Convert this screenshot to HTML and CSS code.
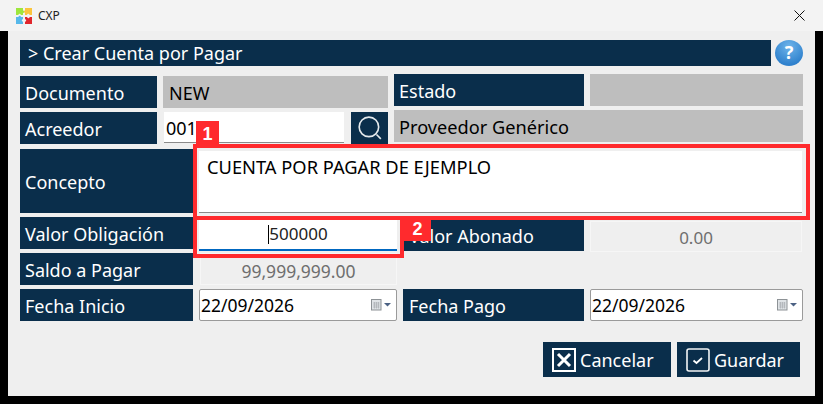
FILE: index.html
```html
<!DOCTYPE html>
<html lang="en">

<head>
    <meta charset="UTF-8">
    <title>CXP</title>
    <link rel="stylesheet" href="styles.css">
</head>

<body>
    <div class="titlebar">
        <svg class="app-logo" viewBox="0 0 16 16" width="16" height="16">
            <path fill="#9ee63c" d="M0 0h7v2.5a1.2 1.2 0 0 1 0 2.4V7H4.800a1.200 1.200 0 0 0-2.400 0H0z" />
            <path fill="#fbc53d" d="M9 0h7v7h-2.500a1.200 1.200 0 0 0-2.400 0H9V4.800a1.200 1.200 0 0 1 0-2.400z" />
            <path fill="#56b8ea" d="M0 9h2.500a1.200 1.200 0 0 1 2.400 0H7v2.200a1.200 1.200 0 0 0 0 2.400V16H0z" />
            <path fill="#e0262c" d="M9 9h2.200a1.200 1.200 0 0 0 2.400 0H16v7H9v-2.400a1.200 1.200 0 0 0 0-2.400z" />
        </svg>
        <span class="app-name">CXP</span>
        <svg class="close-x" viewBox="0 0 11 11" width="11" height="11">
            <path d="M.5.5l10 10M10.500.5l-10 10" stroke="#111" stroke-width="1" fill="none" />
        </svg>
    </div>

    <div class="dialog">
        <div class="header-row">
            <div class="header-bar">&gt; Crear Cuenta por Pagar</div>
            <div class="help-btn">?</div>
        </div>

        <div class="top-section">
            <div class="col col-left-top">
                <div class="row">
                    <div class="label label-doc">Documento</div>
                    <div class="readonly-grey grow">NEW</div>
                </div>
                <div class="row">
                    <div class="label label-doc">Acreedor</div>
                    <div class="text-input acreedor-input">001</div>
                    <div class="search-btn">
                        <svg viewBox="0 0 24 24" width="26" height="26">
                            <circle cx="11" cy="11" r="9" stroke="#e4e9ec" stroke-width="1.500" fill="none" />
                            <path d="M18 18l4 4" stroke="#e4e9ec" stroke-width="1.500" />
                        </svg>
                    </div>
                </div>
            </div>
            <div class="col col-right-top">
                <div class="row">
                    <div class="label label-estado">Estado</div>
                    <div class="readonly-grey grow"></div>
                </div>
                <div class="row">
                    <div class="readonly-grey grow proveedor">Proveedor Genérico</div>
                </div>
            </div>
        </div>

        <div class="concept-row">
            <div class="label label-wide concept-label">Concepto</div>
            <div class="concept-box">CUENTA POR PAGAR DE EJEMPLO</div>
        </div>

        <div class="lower-section">
            <div class="col col-left-low">
                <div class="row">
                    <div class="label label-wide">Valor Obligación</div>
                    <div class="amount-input"><span class="caret"></span>500000</div>
                </div>
                <div class="row">
                    <div class="label label-wide">Saldo a Pagar</div>
                    <div class="readonly-light saldo">99,999,999.00</div>
                </div>
                <div class="row">
                    <div class="label label-wide">Fecha Inicio</div>
                    <div class="date-input">
                        <span>22/09/2026</span>
                        <svg class="cal-icon" viewBox="0 0 20 12" width="20" height="12">
                            <rect x=".5" y=".5" width="9.500" height="10.500" fill="#dfe3e6" stroke="#8d9296" />
                            <path d="M2 4h6.500M2 6h6.500M2 8h6.500M3.500 3v6.500M5.500 3v6.500M7.500 3v6.500" stroke="#a9aeb2" stroke-width=".7" />
                            <path d="M13 4h7l-3.500 3.500z" fill="#4c6284" />
                        </svg>
                    </div>
                </div>
            </div>
            <div class="col col-right-low">
                <div class="label abonado-label">Valor Abonado</div>
                <div class="readonly-light abonado">0.00</div>
                <div class="row fecha-pago-row">
                    <div class="label pago-label">Fecha Pago</div>
                    <div class="date-input pago-input">
                        <span>22/09/2026</span>
                        <svg class="cal-icon" viewBox="0 0 20 12" width="20" height="12">
                            <rect x=".5" y=".5" width="9.500" height="10.500" fill="#dfe3e6" stroke="#8d9296" />
                            <path d="M2 4h6.500M2 6h6.500M2 8h6.500M3.500 3v6.500M5.500 3v6.500M7.500 3v6.500" stroke="#a9aeb2" stroke-width=".7" />
                            <path d="M13 4h7l-3.500 3.500z" fill="#4c6284" />
                        </svg>
                    </div>
                </div>
            </div>
        </div>

        <div class="actions">
            <div class="action-btn btn-cancel">
                <svg viewBox="0 0 24 24" width="24" height="24">
                    <rect x="1" y="1" width="22" height="22" fill="none" stroke="#fff" stroke-width="2" />
                    <path d="M6 6l12 12M18 6L6 18" stroke="#fff" stroke-width="3" />
                </svg>
                Cancelar
            </div>
            <div class="action-btn btn-save">
                <svg viewBox="0 0 24 24" width="24" height="24">
                    <rect x="1" y="1" width="22" height="22" rx="2" fill="none" stroke="#f2f4f5" stroke-width="1.600" />
                    <path d="M7.500 12.500l3 2.500 5.500-5" fill="none" stroke="#fff" stroke-width="1.800" />
                </svg>
                Guardar
            </div>
        </div>
    </div>

    <!-- tutorial marks drawn on top of the form -->
    <div class="mark mark-concept"></div>
    <div class="mark mark-valor"></div>
    <div class="badge badge-one">1</div>
    <div class="badge badge-two">2</div>
</body>

</html>
```

FILE: styles.css
```css
* {
    margin: 0;
    padding: 0;
    box-sizing: border-box;
}

body {
    width: 823px;
    height: 404px;
    overflow: hidden;
    position: relative;
    background: #000;
    font-family: "Noto Sans", "Open Sans", sans-serif;
    font-size: 18px;
    color: #000;
}

.titlebar {
    height: 31px;
    background: #f3f3f3;
    display: flex;
    align-items: center;
    padding: 0 18px 0 16px;
}

.app-logo {
    margin-right: 6px;
}

.app-name {
    font-size: 12px;
    color: #222;
}

.close-x {
    margin-left: auto;
}

.dialog {
    width: 807px;
    height: 365px;
    margin-left: 8px;
    background: #efefef;
    padding: 9px 12px 0;
}

.header-row {
    display: flex;
    gap: 4px;
    height: 26px;
}

.header-bar {
    width: 751px;
    background: #0a2e4b;
    color: #fff;
    padding-left: 8px;
    line-height: 26px;
}

.help-btn {
    width: 28px;
    height: 26px;
    border-radius: 50%;
    background: radial-gradient(circle at 50% 25%, #6eb4ea, #2f81cd 75%);
    color: #fff;
    font-size: 18px;
    font-weight: 700;
    text-align: center;
    line-height: 25px;
}

.top-section {
    display: flex;
    gap: 6px;
    margin-top: 8px;
}

.col {
    display: flex;
    flex-direction: column;
    gap: 4px;
}

.col-left-top {
    width: 368px;
    padding-top: 2px;
}

.col-right-top {
    width: 409px;
}

.row {
    display: flex;
    gap: 6px;
    height: 32px;
}

.label {
    background: #0a2e4b;
    color: #fff;
    padding-left: 5px;
    line-height: 35px;
    flex-shrink: 0;
}

.label-doc {
    width: 137px;
}

.label-estado {
    width: 190px;
    padding-left: 5px;
    line-height: 34px;
}

.label-wide {
    width: 173px;
}

.readonly-grey {
    background: #bebebe;
    padding-left: 6px;
    line-height: 35px;
}

.proveedor {
    padding-left: 5px;
    line-height: 34px;
    font-size: 18.2px;
}

.grow {
    flex: 1;
}

.text-input {
    background: #fff;
    height: 31px;
    line-height: 33px;
    border-bottom: 1px solid #8a8a8a;
}

.acreedor-input {
    width: 180px;
    margin-left: 1px;
    padding-left: 2px;
}

.search-btn {
    width: 37px;
    background: #0a2e4b;
    display: flex;
    align-items: center;
    justify-content: center;
    margin-left: 1px;
}

.concept-row {
    display: flex;
    gap: 6px;
    margin-top: 5px;
    height: 64px;
}

.concept-label {
    line-height: 66px;
}

.concept-box {
    width: 603px;
    height: 62px;
    margin-top: 2px;
    background: #fff;
    border-bottom: 1px solid #8a8a8a;
    padding: 4px 8px;
    line-height: 24px;
    font-size: 18.3px;
}

.lower-section {
    display: flex;
    gap: 6px;
    margin-top: 4px;
}

.col-left-low {
    width: 377px;
}

.amount-input {
    width: 198px;
    height: 33px;
    margin-top: 1px;
    background: #fff;
    border-bottom: 2px solid #0067c0;
    text-align: center;
    line-height: 32px;
    position: relative;
    color: #222;
    font-size: 17px;
}

.caret {
    display: inline-block;
    width: 1px;
    height: 19px;
    background: #000;
    vertical-align: -4px;
}

.readonly-light {
    border: 1px solid #f6f6f6;
    background: #efefef;
    color: #6e6e6e;
    text-align: center;
}

.saldo {
    width: 197px;
    margin-left: 1px;
    line-height: 34px;
    font-size: 17.5px;
}

.date-input {
    width: 198px;
    background: #fff;
    border: 1px solid #9a9a9a;
    border-radius: 2px;
    display: flex;
    align-items: center;
    padding-left: 1px;
    padding-right: 5px;
    font-size: 17.5px;
}

.cal-icon {
    margin-left: auto;
}

.col-right-low {
    width: 400px;
    gap: 0;
    position: relative;
}

.abonado-label {
    width: 180px;
    height: 34px;
    margin-left: 1px;
    line-height: 38px;
    padding-left: 5px;
}

.abonado {
    width: 212px;
    height: 31px;
    line-height: 31px;
    position: absolute;
    left: 187px;
    top: 4px;
    font-size: 17px;
}

.fecha-pago-row {
    margin-top: 38px;
}

.pago-label {
    width: 181px;
    padding-left: 6px;
}

.pago-input {
    width: 213px;
}

.actions {
    display: flex;
    gap: 6px;
    margin: 21px 0 0 523px;
}

.action-btn {
    height: 35px;
    background: #0a2e4b;
    color: #fff;
    display: flex;
    align-items: center;
    gap: 4px;
    padding-left: 9px;
    font-size: 18px;
}

.btn-cancel {
    width: 128px;
}

.btn-save {
    width: 123px;
}

.mark {
    position: absolute;
    border: 4px solid #ff2a2d;
}

.mark-concept {
    left: 193px;
    top: 144px;
    width: 617px;
    height: 76px;
}

.mark-valor {
    left: 193px;
    top: 216px;
    width: 211px;
    height: 42px;
}

.badge {
    position: absolute;
    background: #ff2a2d;
    color: #fff;
    font-family: "Liberation Sans", sans-serif;
    font-weight: 700;
    font-size: 18px;
    text-align: center;
}

.badge-one {
    left: 196px;
    top: 121px;
    width: 23px;
    height: 23px;
    line-height: 27px;
}

.badge-two {
    left: 404px;
    top: 218px;
    width: 27px;
    height: 23px;
    line-height: 23px;
}
```
